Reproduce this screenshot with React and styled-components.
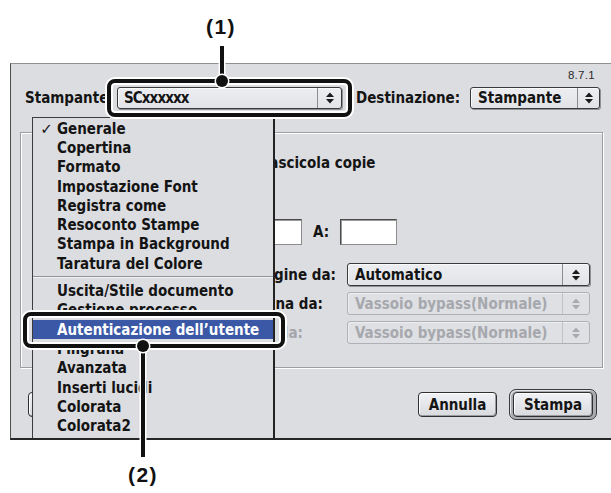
import React from "react";
import styled, { createGlobalStyle, css } from "styled-components";

const UI = "'DejaVu Sans Condensed', 'DejaVu Sans', sans-serif";

const GlobalStyle = createGlobalStyle`
  html, body { margin: 0; padding: 0; background: #fff; overflow: hidden; }
  #root { width: 611px; height: 493px; }
  * { box-sizing: border-box; }
`;

const Stage = styled.div`
  position: relative;
  width: 611px;
  height: 493px;
  overflow: hidden;
  padding: 63px 0 0 10px;
  background: #fff;
`;

const Window = styled.div`
  position: relative;
  width: 610px;
  height: 377px;
  border-top: 1px solid #8e9094;
  border-left: 1px solid #4d4d4d;
  border-bottom: 2px solid #262626;
  background: #dcdde1;
  overflow: hidden;
  display: flex;
  flex-direction: column;
  font-family: ${UI};
  font-weight: bold;
  font-size: 15px;
  color: #141414;
`;

const VersionRow = styled.div`
  margin-top: 5px;
  height: 12px;
  line-height: 12px;
  text-align: right;
  padding-right: 25px;
  font-family: "Liberation Sans", Arial, sans-serif;
  font-weight: normal;
  font-size: 11.5px;
  letter-spacing: 0.3px;
  color: #2b2b2b;
`;

const TopRow = styled.div`
  margin-top: 6px;
  height: 22px;
  display: flex;
  align-items: center;
  padding-left: 14px;
`;

const FieldLabel = styled.div`
  width: ${(p) => p.$w}px;
  margin-left: ${(p) => p.$ml || 0}px;
  flex: none;
  white-space: nowrap;
  text-align: ${(p) => (p.$right ? "right" : "left")};
  padding-right: ${(p) => p.$pr || 0}px;
  color: ${(p) => (p.$dim ? "#a4a6ab" : "#141414")};
`;

const Popup = styled.div`
  flex: none;
  width: ${(p) => p.$w}px;
  height: ${(p) => p.$h || 22}px;
  display: flex;
  align-items: stretch;
  border: 1px solid #3a3a3a;
  border-radius: 3px;
  background: linear-gradient(#eceef1, #e2e3e7);
  box-shadow: 1px 1px 0 #8f9196, inset 1px 1px 0 #fafafa;
  color: #141414;
  ${(p) =>
    p.$disabled &&
    css`
      border-color: #aeb0b5;
      background: #dfe0e4;
      box-shadow: inset 1px 1px 0 #eceef0;
      color: #a6a8ad;
    `}
`;

const PopupText = styled.div`
  flex: 1;
  display: flex;
  align-items: center;
  padding-left: ${(p) => p.$pl || 7}px;
  white-space: nowrap;
  overflow: hidden;
  letter-spacing: ${(p) => p.$ls || 0}px;
`;

const PopupArrow = styled.div`
  flex: none;
  width: ${(p) => p.$w}px;
  border-left: 1px solid ${(p) => (p.$disabled ? "#c0c2c6" : "#8a8c90")};
  display: flex;
  align-items: center;
  justify-content: center;
`;

const Arrows = ({ color = "#1a1a1a" }) => (
  <svg width="8" height="12" viewBox="0 0 8 12">
    <polygon points="0,5 4,0.5 8,5" fill={color} />
    <polygon points="0,7 8,7 4,11.5" fill={color} />
  </svg>
);

const PopupMenu = ({ w, h, arrow, text, disabled, ls, pl }) => (
  <Popup $w={w} $h={h} $disabled={disabled}>
    <PopupText $ls={ls} $pl={pl}>{text}</PopupText>
    <PopupArrow $w={arrow} $disabled={disabled}>
      <Arrows color={disabled ? "#a8aaaf" : "#1a1a1a"} />
    </PopupArrow>
  </Popup>
);

const Panel = styled.div`
  margin-top: 23px;
  margin-left: 9px;
  width: 583px;
  height: 236px;
  flex: none;
  border: 1px solid #9c9ea3;
  box-shadow: 1px 1px 0 #fff, inset 1px 1px 0 #fff;
  display: flex;
  flex-direction: column;
  padding-left: 20px;
`;

const Row = styled.div`
  margin-top: ${(p) => p.$mt}px;
  height: ${(p) => p.$h}px;
  display: flex;
  align-items: center;
  flex: none;
`;

const TextBox = styled.div`
  flex: none;
  width: ${(p) => p.$w}px;
  height: ${(p) => p.$h || 26}px;
  margin-left: ${(p) => p.$ml || 0}px;
  background: #fff;
  border: 1px solid #4a4a4a;
  border-right-color: #8c8c8c;
  border-bottom-color: #8c8c8c;
  box-shadow: inset 1px 1px 0 #9a9a9a;
  font-weight: normal;
  font-size: 13px;
  display: flex;
  align-items: center;
  padding-left: 4px;
`;

const CheckBox = styled.div`
  flex: none;
  width: 13px;
  height: 13px;
  margin-left: ${(p) => p.$ml || 0}px;
  border: 1px solid #333;
  background: #eee;
`;

const Radio = styled.div`
  flex: none;
  width: 12px;
  height: 12px;
  border-radius: 50%;
  border: 1px solid #333;
  background: ${(p) => (p.$on ? "radial-gradient(circle, #222 0 3px, #eee 3.5px)" : "#eee")};
  margin: 0 5px 0 ${(p) => p.$ml || 0}px;
`;

const Inline = styled.span`
  margin-left: ${(p) => p.$ml || 0}px;
  white-space: nowrap;
  flex: none;
`;

const ButtonRow = styled.div`
  margin-top: 21px;
  height: 31px;
  flex: none;
  display: flex;
  align-items: center;
  padding-left: 17px;
  padding-right: 23px;
`;

const Button = styled.div`
  flex: none;
  width: ${(p) => p.$w}px;
  height: 25px;
  border: 1px solid #2f2f2f;
  border-radius: 4px;
  background: linear-gradient(#f1f2f5, #d9dade);
  box-shadow: inset 1px 1px 0 #fff, inset -1px -1px 0 #9a9ca0;
  display: flex;
  align-items: center;
  justify-content: center;
  white-space: nowrap;
  margin-right: ${(p) => p.$mr || 0}px;
`;

const Spacer = styled.div`
  flex: 1;
`;

const DefaultRing = styled.div`
  flex: none;
  width: 88px;
  height: 31px;
  border: 1px solid #3a3a3a;
  border-radius: 7px;
  background: #a9abb0;
  box-shadow: inset 1px 1px 0 #e8e9ec;
  padding: 2px 3px;
  display: flex;
`;

/* drop-down menu lying over the dialog */
const Menu = styled.div`
  position: absolute;
  left: 21px;
  top: 53px;
  width: 243px;
  bottom: -10px;
  background: #dcdde1;
  border-left: 1px solid #3c3c3c;
  border-top: 1px solid #3c3c3c;
  border-right: 2px solid #232323;
  padding-top: 1px;
  z-index: 2;
`;

const Item = styled.div`
  height: 19.3px;
  display: flex;
  align-items: center;
  white-space: nowrap;
  color: #141414;
  ${(p) =>
    p.$active &&
    css`
      background: #3b58a7;
      color: #fff;
    `}
`;

const Mark = styled.span`
  width: 24px;
  flex: none;
  padding-left: 3px;
  text-align: center;
  font-family: "DejaVu Sans", sans-serif;
  font-weight: bold;
  font-size: 15px;
`;

const Separator = styled.div`
  height: 8px;
  position: relative;
  &::after {
    content: "";
    position: absolute;
    left: 0;
    right: 0;
    top: 3px;
    height: 1px;
    background: #8f9195;
    box-shadow: 0 1px 0 #f4f4f6;
  }
`;

/* annotation callouts */
const Callout = styled.div`
  position: absolute;
  left: ${(p) => p.$x}px;
  top: ${(p) => p.$y}px;
  width: ${(p) => p.$w}px;
  height: ${(p) => p.$h}px;
  border: 4px solid #111;
  border-radius: 8px;
  box-shadow: 0 0 0 2px #fff, inset 0 0 0 2px #fff;
  z-index: 5;
`;

const Leader = styled.div`
  position: absolute;
  left: ${(p) => p.$x - 2}px;
  top: ${(p) => p.$y}px;
  width: 4px;
  height: ${(p) => p.$h}px;
  background: #111;
  box-shadow: 0 0 0 1.5px #fff;
  z-index: 6;
`;

const Dot = styled.div`
  position: absolute;
  left: ${(p) => p.$x - 6}px;
  top: ${(p) => p.$y - 6}px;
  width: 12px;
  height: 12px;
  border-radius: 50%;
  background: #111;
  box-shadow: 0 0 0 1.5px #fff;
  z-index: 7;
`;

const Tag = styled.div`
  position: absolute;
  left: ${(p) => p.$x - 30}px;
  top: ${(p) => p.$y}px;
  width: 60px;
  text-align: center;
  font-family: "Liberation Sans", Arial, sans-serif;
  font-weight: bold;
  font-size: 21px;
  letter-spacing: 1.5px;
  line-height: 24px;
  color: #111;
  z-index: 6;
`;

const menuItems = [
  "Generale",
  "Copertina",
  "Formato",
  "Impostazione Font",
  "Registra come",
  "Resoconto Stampe",
  "Stampa in Background",
  "Taratura del Colore",
  "-",
  "Uscita/Stile documento",
  "Gestione processo",
  "Autenticazione dell’utente",
  "Filigrana",
  "Avanzata",
  "Inserti lucidi",
  "Colorata",
  "Colorata2",
  "Colorata3",
];

export default function App() {
  return (
    <>
      <GlobalStyle />
      <Stage>
        <Window>
          <VersionRow>8.7.1</VersionRow>
          <TopRow>
            <FieldLabel $w={92}>Stampante</FieldLabel>
            <PopupMenu w={225} arrow={24} text="SCxxxxxx" ls={-0.9} pl={6} />
            <FieldLabel $w={114} $ml={14}>Destinazione:</FieldLabel>
            <PopupMenu w={130} arrow={22} text="Stampante" />
          </TopRow>

          <Panel>
            <Row $mt={19} $h={22}>
              <FieldLabel $w={60}>Copie:</FieldLabel>
              <TextBox $w={40} $h={22}>1</TextBox>
              <CheckBox $ml={100} />
              <Inline $ml={7}>Fascicola copie</Inline>
            </Row>
            <Row $mt={45} $h={26}>
              <FieldLabel $w={60}>Pagine:</FieldLabel>
              <FieldLabel $w={144}>
                <Row $mt={0} $h={26}>
                  <Radio $on />
                  <Inline>Tutte</Inline>
                  <Radio $ml={10} />
                  <Inline>Da:</Inline>
                </Row>
              </FieldLabel>
              <TextBox $w={57} />
              <FieldLabel $w={27} $ml={11}>A:</FieldLabel>
              <TextBox $w={57} />
            </Row>
            <Row $mt={18} $h={23}>
              <FieldLabel $w={306} $right $pr={11}>Tutte le pagine da:</FieldLabel>
              <PopupMenu w={243} h={23} arrow={27} text="Automatico" />
            </Row>
            <Row $mt={6} $h={23}>
              <FieldLabel $w={306} $right $pr={24}>Prima pagina da:</FieldLabel>
              <PopupMenu w={243} h={23} arrow={27} text="Vassoio bypass(Normale)" disabled />
            </Row>
            <Row $mt={6} $h={23}>
              <FieldLabel $w={306} $right $pr={44} $dim>Rimanenti da:</FieldLabel>
              <PopupMenu w={243} h={23} arrow={27} text="Vassoio bypass(Normale)" disabled />
            </Row>
          </Panel>

          <ButtonRow>
            <Button $w={170}>Salva impostazioni</Button>
            <Spacer />
            <Button $w={79} $mr={12}>Annulla</Button>
            <DefaultRing>
              <Button $w={80}>Stampa</Button>
            </DefaultRing>
          </ButtonRow>

          <Menu>
            {menuItems.map((t, i) =>
              t === "-" ? (
                <Separator key={i} />
              ) : (
                <Item key={i} $active={t.startsWith("Autenticazione")}>
                  <Mark>{i === 0 ? "✓" : ""}</Mark>
                  {t}
                </Item>
              )
            )}
          </Menu>
        </Window>

        <Tag $x={221} $y={15}>(1)</Tag>
        <Leader $x={222} $y={46} $h={34} />
        <Callout $x={107} $y={79} $w={245} $h={38} />
        <Dot $x={222} $y={81} />

        <Callout $x={23} $y={312} $w={262} $h={36} />
        <Leader $x={143} $y={346} $h={111} />
        <Dot $x={143} $y={346} />
        <Tag $x={143} $y={463}>(2)</Tag>
      </Stage>
    </>
  );
}
